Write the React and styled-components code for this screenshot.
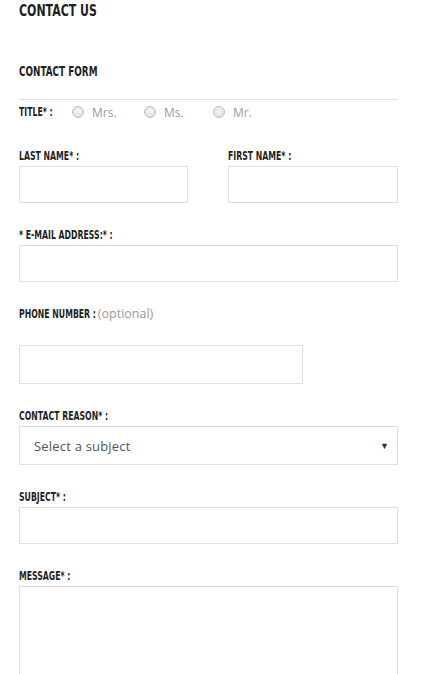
import styled, { createGlobalStyle } from "styled-components";

const GlobalStyle = createGlobalStyle`
  body {
    margin: 0;
    background: #ffffff;
    font-family: "Open Sans", "DejaVu Sans", sans-serif;
  }
`;

// condensed display face: DejaVu Sans Condensed squeezed a bit further
const labelFont = `"DejaVu Sans Condensed", "Liberation Sans", sans-serif`;

const Page = styled.div`
  width: 379px;
  padding: 0 28px 0 19px;
`;

const Squeeze = styled.span`
  display: inline-block;
  transform: scaleX(${({ $x }) => $x || 0.72});
  transform-origin: left center;
  white-space: nowrap;
`;

const PageTitle = styled.h1`
  margin: 0;
  padding-top: 2px;
  font-family: ${labelFont};
  font-weight: 700;
  font-size: 16.5px;
  line-height: 18px;
  color: #1f1f1f;
`;

const FormTitle = styled.h2`
  margin: 44px 0 0;
  font-family: ${labelFont};
  font-weight: 700;
  font-size: 13.5px;
  line-height: 15px;
  color: #1f1f1f;
`;

const Divider = styled.hr`
  margin: 20px 0 0;
  border: 0;
  border-top: 1px solid #e2e2e2;
`;

const TitleRow = styled.div`
  display: grid;
  grid-template-columns: 53px auto;
  align-items: center;
  height: 22px;
  margin-top: 1px;
`;

const Label = styled.label`
  display: flex;
  align-items: baseline;
  font-family: ${labelFont};
  font-weight: 700;
  font-size: 12px;
  line-height: 14px;
  color: #1f1f1f;
  margin-bottom: ${({ $gap }) => $gap || "3px"};
  white-space: nowrap;
`;

const Optional = styled.span`
  margin-left: -28px;
  font-family: "Open Sans", sans-serif;
  font-weight: 400;
  font-size: 12.5px;
  color: #9a9a9a;
`;

const RadioGroup = styled.div`
  display: flex;
  align-items: center;
`;

const RadioOption = styled.span`
  display: flex;
  align-items: center;
  width: ${({ $w }) => $w};
  font-family: "Open Sans", sans-serif;
  font-size: 12px;
  color: #9a9a9a;
`;

const RadioDot = styled.span`
  display: inline-block;
  box-sizing: border-box;
  width: 12px;
  height: 12px;
  border-radius: 50%;
  border: 1px solid #bdbdbd;
  background: radial-gradient(circle at 50% 40%, #f4f4f4 0%, #dcdcdc 100%);
  margin-right: 8px;
`;

const Field = styled.div`
  margin-top: ${({ $top }) => $top || "25px"};
  width: ${({ $w }) => $w || "100%"};
`;

const Row = styled.div`
  display: flex;
  justify-content: space-between;
  margin-top: 26px;
`;

const TextInput = styled.div`
  box-sizing: border-box;
  width: 100%;
  height: ${({ $h }) => $h || "37px"};
  border: 1px solid #e0e0e0;
  background: #fff;
`;

const Select = styled.div`
  box-sizing: border-box;
  width: 100%;
  height: 39px;
  border: 1px solid #e0e0e0;
  display: flex;
  align-items: center;
  justify-content: space-between;
  padding: 0 8px 0 14px;
  font-family: "Open Sans", sans-serif;
  font-size: 13px;
  color: #555;
  letter-spacing: 0.2px;
`;

const Arrow = styled.span`
  font-size: 9px;
  color: #333;
`;

export default function App() {
  return (
    <>
      <GlobalStyle />
      <Page>
        <PageTitle><Squeeze $x={0.74}>CONTACT US</Squeeze></PageTitle>
        <FormTitle><Squeeze $x={0.73}>CONTACT FORM</Squeeze></FormTitle>
        <Divider />
        <TitleRow>
          <Label $gap="0"><Squeeze>TITLE* :</Squeeze></Label>
          <RadioGroup>
            <RadioOption $w="72px"><RadioDot />Mrs.</RadioOption>
            <RadioOption $w="69px"><RadioDot />Ms.</RadioOption>
            <RadioOption $w="40px"><RadioDot />Mr.</RadioOption>
          </RadioGroup>
        </TitleRow>
        <Row>
          <Field $top="0" $w="169px">
            <Label><Squeeze>LAST NAME* :</Squeeze></Label>
            <TextInput />
          </Field>
          <Field $top="0" $w="170px">
            <Label><Squeeze>FIRST NAME* :</Squeeze></Label>
            <TextInput />
          </Field>
        </Row>
        <Field>
          <Label><Squeeze>* E-MAIL ADDRESS:* :</Squeeze></Label>
          <TextInput />
        </Field>
        <Field $w="284px">
          <Label $gap="24px">
            <Squeeze>PHONE NUMBER :</Squeeze>
            <Optional>(optional)</Optional>
          </Label>
          <TextInput $h="39px" />
        </Field>
        <Field>
          <Label><Squeeze>CONTACT REASON* :</Squeeze></Label>
          <Select>
            Select a subject
            <Arrow>▼</Arrow>
          </Select>
        </Field>
        <Field>
          <Label><Squeeze>SUBJECT* :</Squeeze></Label>
          <TextInput />
        </Field>
        <Field>
          <Label><Squeeze>MESSAGE* :</Squeeze></Label>
          <TextInput $h="140px" />
        </Field>
      </Page>
    </>
  );
}
